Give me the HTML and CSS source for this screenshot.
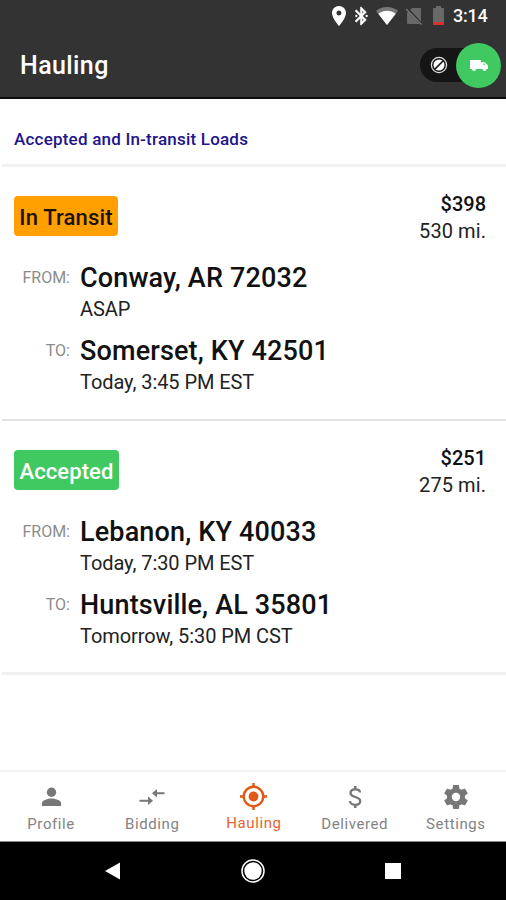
FILE: index.html
```html
<!DOCTYPE html>
<html lang="en">
<head>
<meta charset="utf-8">
<title>Hauling</title>
<link rel="stylesheet" href="styles.css">
</head>
<body>
<header class="header">
  <div class="status">
    <svg class="pin" viewBox="5 2 14 20"><path d="M12 2C8.13 2 5 5.13 5 9c0 5.25 7 13 7 13s7-7.75 7-13c0-3.87-3.13-7-7-7zm0 9.5a2.5 2.5 0 1 1 0-5 2.5 2.5 0 0 1 0 5z"/></svg>
    <svg class="bluetooth" viewBox="5 2 14.5 20"><path stroke="#fff" stroke-width=".5" d="M17.71 7.71L12 2h-1v7.59L6.41 5 5 6.41 10.59 12 5 17.59 6.41 19 11 14.41V22h1l5.71-5.71-4.3-4.29 4.3-4.29zM13 5.83l1.88 1.88L13 9.59V5.83zm1.88 10.46L13 18.17v-3.76l1.88 1.88z"/><circle cx="6.5" cy="12" r="1.3"/><circle cx="18" cy="12" r="1.3"/></svg>
    <svg class="wifi" viewBox="0 0 22 18"><path fill="#777" d="M0 4C6-1.3 16-1.3 22 4L11 18z"/><path d="M2.3 6.8C7.5 2.8 14.500 2.800 19.700 6.800L11 18z"/></svg>
    <svg class="sim" viewBox="0 0 16 18"><path fill="#686868" d="M6 1h8a1 1 0 0 1 1 1v15H2a1 1 0 0 1-1-1V6z"/><path fill="none" stroke="#333" stroke-width="2.600" d="M0 .5l16 17"/><path fill="none" stroke="#777" stroke-width="1.300" d="M0 2l15.500 15.500"/></svg>
    <svg class="battery" viewBox="0 0 11 19"><path fill="#696969" d="M3 0h5v2h2a1 1 0 0 1 1 1v13H0V3a1 1 0 0 1 1-1h2z"/><path fill="#dc3030" d="M0 16h11v2a1 1 0 0 1-1 1H1a1 1 0 0 1-1-1z"/></svg>
    <span class="time">3:14</span>
  </div>
  <div class="toolbar">
    <h1>Hauling</h1>
    <div class="toggle">
      <svg class="ban" viewBox="0 0 18 18"><circle cx="9" cy="9" r="7.600" fill="none" stroke="#ddd" stroke-width="1.300"/><circle cx="9" cy="9" r="5.500"/><path stroke="#151515" stroke-width="1.700" d="M5 13l8-8"/></svg>
      <span class="knob"><svg class="truck" viewBox="0 0 20 12"><path d="M1 1h11v2.300h3.700L19 6.500V10h-1.500a2 2 0 0 1-4 0H7a2 2 0 0 1-4 0H1z"/><path fill="#41c961" d="M14.300 4.500h1l1.100 1.300h-2.100z"/></svg></span>
    </div>
  </div>
</header>
<main>
  <h2 class="section">Accepted and In-transit Loads</h2>
  <article class="load">
    <div class="top"><span class="badge transit">In Transit</span><div class="price"><b>$398</b><span>530 mi.</span></div></div>
    <div class="stop"><span class="dir">FROM:</span><div><h3>Conway, AR 72032</h3><p>ASAP</p></div></div>
    <div class="stop"><span class="dir">TO:</span><div><h3>Somerset, KY 42501</h3><p>Today, 3:45 PM EST</p></div></div>
  </article>
  <article class="load last">
    <div class="top"><span class="badge accepted">Accepted</span><div class="price"><b>$251</b><span>275 mi.</span></div></div>
    <div class="stop"><span class="dir">FROM:</span><div><h3>Lebanon, KY 40033</h3><p>Today, 7:30 PM EST</p></div></div>
    <div class="stop"><span class="dir">TO:</span><div><h3>Huntsville, AL 35801</h3><p>Tomorrow, 5:30 PM CST</p></div></div>
  </article>
</main>
<nav class="tabs">
  <div class="tab"><svg viewBox="0 0 24 24"><circle cx="12" cy="7" r="4.900"/><path d="M12 13.500c-3.300 0-10 1.500-10 5V21.500h20v-3c0-3.500-6.700-5-10-5z"/></svg><span>Profile</span></div>
  <div class="tab"><svg class="wide" viewBox="0 0 26 24"><path d="M.5 16.800v-2H9v-3.300l5 4.300-5 4.300v-3.300zM25.500 9.200v-2H18V3.900l-5 4.300 5 4.300V9.200z"/></svg><span>Bidding</span></div>
  <div class="tab active"><svg class="target" viewBox="1 1 22 22"><path d="M12 8a4 4 0 1 0 0 8 4 4 0 0 0 0-8zm8.940 3A8.994 8.994 0 0 0 13 3.060V1h-2v2.060A8.994 8.994 0 0 0 3.060 11H1v2h2.060A8.994 8.994 0 0 0 11 20.940V23h2v-2.060A8.994 8.994 0 0 0 20.940 13H23v-2h-2.060zM12 19a7 7 0 1 1 0-14 7 7 0 0 1 0 14z"/></svg><span>Hauling</span></div>
  <div class="tab"><svg viewBox="0 0 24 24"><path fill="none" stroke="#777" stroke-width="2.300" d="M17 7.500C17 5.500 15 4.300 12.200 4.300S7.500 5.600 7.500 8c0 2.600 2.500 3.200 4.700 4s5 1.400 5 4-2.300 3.800-5 3.800-5.200-1.300-5.200-3.800"/><path stroke="#777" stroke-width="2.600" d="M12.200 1v3.300m0 15.500V23"/></svg><span>Delivered</span></div>
  <div class="tab"><svg class="gear" viewBox="2 2 20 20"><path d="M19.430 12.980c.04-.32.07-.64.07-.98s-.03-.66-.07-.98l2.110-1.650c.19-.15.24-.42.12-.64l-2-3.460c-.12-.22-.39-.3-.61-.22l-2.490 1c-.52-.4-1.080-.73-1.690-.98l-.38-2.650C14.460 2.180 14.250 2 14 2h-4c-.25 0-.46.18-.49.42l-.38 2.650c-.61.25-1.170.59-1.690.98l-2.490-1c-.23-.09-.49 0-.61.22l-2 3.460c-.13.22-.07.49.12.64l2.110 1.650c-.04.32-.07.65-.07.98s.03.66.07.98l-2.110 1.650c-.19.15-.24.42-.12.64l2 3.460c.12.22.39.3.61.22l2.490-1c.52.4 1.080.73 1.690.98l.38 2.650c.03.24.24.42.49.42h4c.25 0 .46-.18.49-.42l.38-2.650c.61-.25 1.170-.59 1.690-.98l2.490 1c.23.09.49 0 .61-.22l2-3.460c.12-.22.07-.49-.12-.64l-2.110-1.650zM12 15.500a3.500 3.500 0 1 1 0-7 3.500 3.500 0 0 1 0 7z"/></svg><span>Settings</span></div>
</nav>
<footer class="system">
  <svg viewBox="0 0 24 24"><path d="M4 12L19 3.500v17z"/></svg>
  <svg viewBox="0 0 24 24"><circle cx="12" cy="12" r="11" fill="none" stroke="#fff" stroke-width="1.500"/><circle cx="12" cy="12" r="8.700"/></svg>
  <svg viewBox="0 0 24 24"><path d="M4 4h16v16H4z"/></svg>
</footer>
</body>
</html>
```
FILE: styles.css
```css
* { box-sizing: border-box; }
body, h1, h2, h3, p { margin: 0; }
body {
  width: 506px;
  height: 900px;
  overflow: hidden;
  display: flex;
  flex-direction: column;
  background: #fff;
  color: #111;
  font-family: Roboto, "Liberation Sans", sans-serif;
}
svg { display: block; flex: none; fill: #fff; }

.header { height: 99px; background: #333; border-bottom: 2px solid #0c0c0c; }
.status { height: 31px; padding-right: 18px; display: flex; justify-content: flex-end; align-items: center; }
.pin { width: 14px; height: 20px; margin-right: 9px; }
.bluetooth { width: 13px; height: 20px; margin-right: 8px; }
.wifi { width: 22px; height: 18px; margin-right: 8px; }
.sim { width: 16px; height: 18px; margin-right: 11px; }
.battery { width: 11px; height: 19px; margin-right: 9px; }
.time { width: 35px; color: #fff; font-size: 18px; font-weight: 500; line-height: 20px; margin-top: 1px; letter-spacing: -.2px; }
.toolbar { height: 66px; padding: 0 5px 0 20px; display: flex; justify-content: space-between; align-items: center; }
.toolbar h1 { color: #fff; font-size: 25px; font-weight: 500; line-height: 30px; margin-top: 4px; letter-spacing: .4px; }
.toggle { width: 81px; height: 34px; margin-top: 2px; padding-left: 10px; border-radius: 17px; background: #151515; display: flex; align-items: center; justify-content: space-between; }
.ban { width: 18px; height: 18px; }
.knob { width: 45px; height: 45px; border-radius: 50%; background: #41c961; display: flex; align-items: center; justify-content: center; }
.truck { width: 20px; height: 12px; }

main { flex: 1; min-height: 0; margin-left: 2px; }
.section { height: 68px; padding: 28px 0 0 12px; border-bottom: 3px solid #f2f2f2; color: #21148c; font-size: 17px; font-weight: 500; line-height: 24px; letter-spacing: .21px; }
.load { height: 254px; padding: 29px 20px 0 12px; border-bottom: 2px solid #e4e4e4; }
.last { height: 254px; border-bottom: 3px solid #f0f0f0; }
.top { display: flex; justify-content: space-between; height: 65px; }
.badge { width: 104px; height: 40px; border-radius: 4px; text-align: center; font-size: 22px; font-weight: 500; line-height: 43px; white-space: nowrap; }
.transit { background: #ffa000; color: #1c1305; letter-spacing: .15px; }
.accepted { width: 105px; background: #41c961; color: #fff; letter-spacing: .1px; }
.price { margin-top: -5px; display: flex; flex-direction: column; text-align: right; font-size: 20px; line-height: 27px; }
.price b { font-weight: 500; }
.price span { color: #222; letter-spacing: .08px; }
.stop { height: 73px; display: flex; }
.dir { width: 56px; margin-right: 10px; text-align: right; color: #8c8c8c; font-size: 16px; line-height: 33px; }
.stop h3 { font-size: 27px; font-weight: 500; line-height: 35px; letter-spacing: .15px; white-space: nowrap; }
.stop p { color: #222; font-size: 20px; line-height: 27px; letter-spacing: -.07px; white-space: nowrap; }

.tabs { height: 72px; border-top: 2px solid #f3f3f3; border-bottom: 1px solid #888; display: grid; grid-template-columns: repeat(5, 1fr); }
.tab { display: flex; flex-direction: column; align-items: center; padding: 13px 0 0 1px; color: #838383; font-size: 15px; line-height: 20px; letter-spacing: .6px; }
.tab svg { width: 24px; height: 24px; margin-bottom: 5px; fill: #777; }
.tab:first-child svg { width: 23px; }
.tab .wide { width: 26px; }
.active { padding: 11px 0 0 2px; color: #e46330; }
.tab .target { width: 27px; height: 27px; margin-bottom: 3px; fill: #df5a19; }
.system { height: 58px; padding: 0 101px; background: #000; display: flex; justify-content: space-between; align-items: center; }
.system svg { width: 24px; height: 24px; }
```
